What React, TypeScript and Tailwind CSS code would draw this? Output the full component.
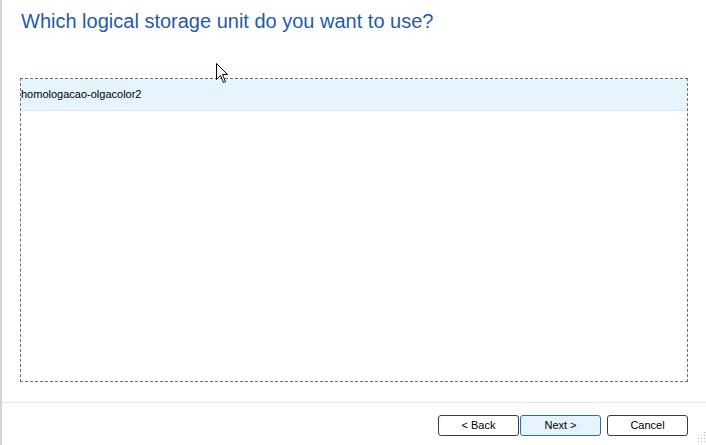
import React from 'react';

const font = { fontFamily: '"Liberation Sans", Arial, sans-serif' };

function Cursor() {
  return (
    <svg
      className="absolute left-[214px] top-[63px]"
      width="13"
      height="21"
      viewBox="0 0 13 21"
    >
      <path
        d="M0.5 0.5 L0.5 16.5 L4.5 12.5 L7.5 19.5 L9.5 18.5 L6.5 11.5 L11.5 11.5 Z"
        fill="#fff"
        stroke="#000"
        strokeWidth="1"
        strokeLinejoin="miter"
      />
    </svg>
  );
}

function Grip() {
  const dots = [
    [8, 0],
    [8, 3],
    [5, 3],
    [8, 6],
    [5, 6],
    [2, 6],
    [8, 9],
    [5, 9],
    [2, 9],
  ];
  return (
    <svg className="absolute right-0 bottom-[2px]" width="10" height="12" viewBox="0 0 10 12">
      {dots.map(([x, y], i) => (
        <rect key={i} x={x} y={y + 1} width="1" height="1" fill="#b9b9b9" />
      ))}
    </svg>
  );
}

export default function App() {
  return (
    <div
      className="relative w-[706px] h-[445px] bg-white border-l-2 border-[#d6d3ce] flex flex-col overflow-hidden"
      style={font}
    >
      <h1 className="pt-[10px] pl-[19px] text-[20px] leading-[23px] text-[#1f5ba9] font-normal">
        Which logical storage unit do you want to use?
      </h1>

      <div className="mt-[45px] ml-[18px] w-[668px] h-[304px] border border-dashed border-[#6e6e6e]">
        <div className="h-[32px] bg-[#e5f5fd] border-b border-[#e2e6e9] flex items-center text-[11px] leading-[13px] text-black">
          homologacao-olgacolor2
        </div>
      </div>

      <div className="mt-[20px] h-px bg-[#e6e6e6]" />

      <div className="mt-[12px] flex justify-end pr-[18px] text-[11px] text-black">
        <button className="w-[81px] h-[21px] rounded-[3px] border border-[#3c3c3c] bg-white">
          &lt; Back
        </button>
        <button className="ml-[1px] w-[81px] h-[21px] rounded-[3px] border border-[#2a6cb0] bg-[#e5f3fd]">
          Next &gt;
        </button>
        <button className="ml-[6px] w-[81px] h-[21px] rounded-[3px] border border-[#3c3c3c] bg-white">
          Cancel
        </button>
      </div>

      <Cursor />
      <Grip />
    </div>
  );
}
